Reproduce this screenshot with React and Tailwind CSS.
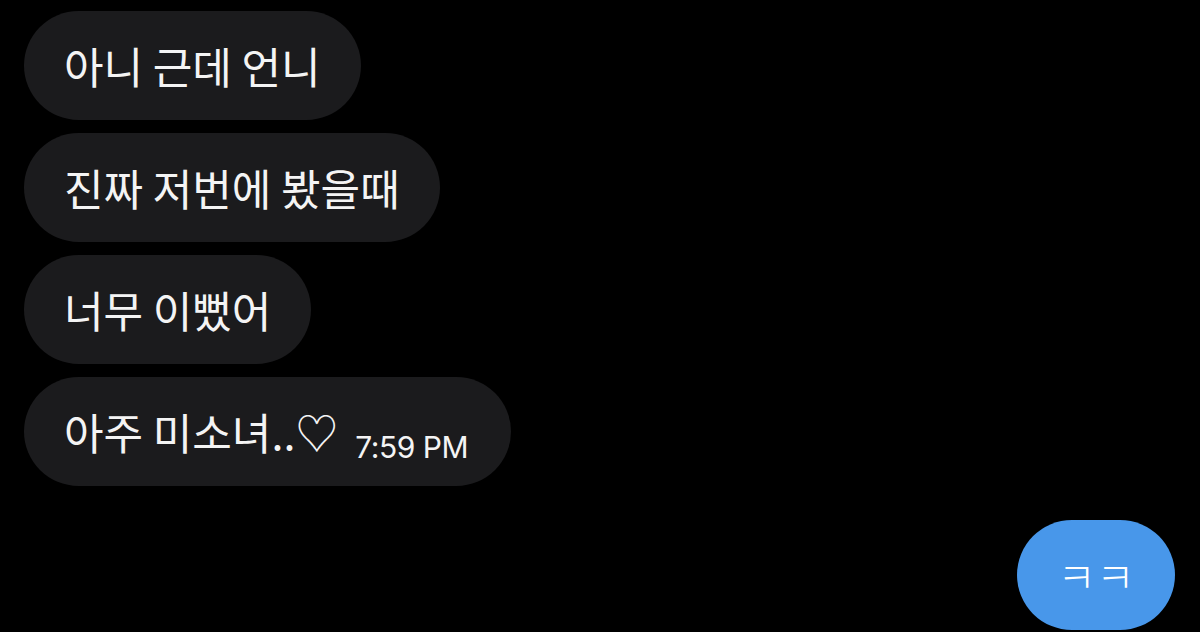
import React from "react";

const messages = ["아니 근데 언니", "진짜 저번에 봤을때", "너무 이뻤어"];

function Bubble({ children }) {
  return (
    <div className="flex h-[109px] items-center self-start rounded-full bg-[#1b1b1d] pl-10 pr-10 text-[43px] leading-none text-[#f4f4f4]">
      {children}
    </div>
  );
}

export default function App() {
  return (
    <div
      className="flex h-[632px] w-[1200px] flex-col overflow-hidden bg-black pl-6 pr-[25px] pt-[11px]"
      style={{ fontFamily: '"Noto Sans CJK KR", "Noto Sans", sans-serif' }}
    >
      <div className="flex flex-col gap-[13px]">
        {messages.map((m) => (
          <Bubble key={m}>{m}</Bubble>
        ))}
        <div className="flex h-[109px] items-center self-start rounded-full bg-[#1b1b1d] pl-10 pr-[43px] text-[#f4f4f4]">
          <span className="text-[43px] leading-none">아주 미소녀..♡</span>
          <span className="ml-[17px] mt-[30px] font-['Inter',sans-serif] text-[30px] leading-none tracking-[-0.5px]">
            7:59 PM
          </span>
        </div>
      </div>
      <div className="mt-[34px] flex justify-end">
        <div className="flex h-[110px] w-[158px] items-center justify-center rounded-full bg-[#4897ea] text-[42px] font-light leading-none text-white">
          ㅋㅋ
        </div>
      </div>
    </div>
  );
}
